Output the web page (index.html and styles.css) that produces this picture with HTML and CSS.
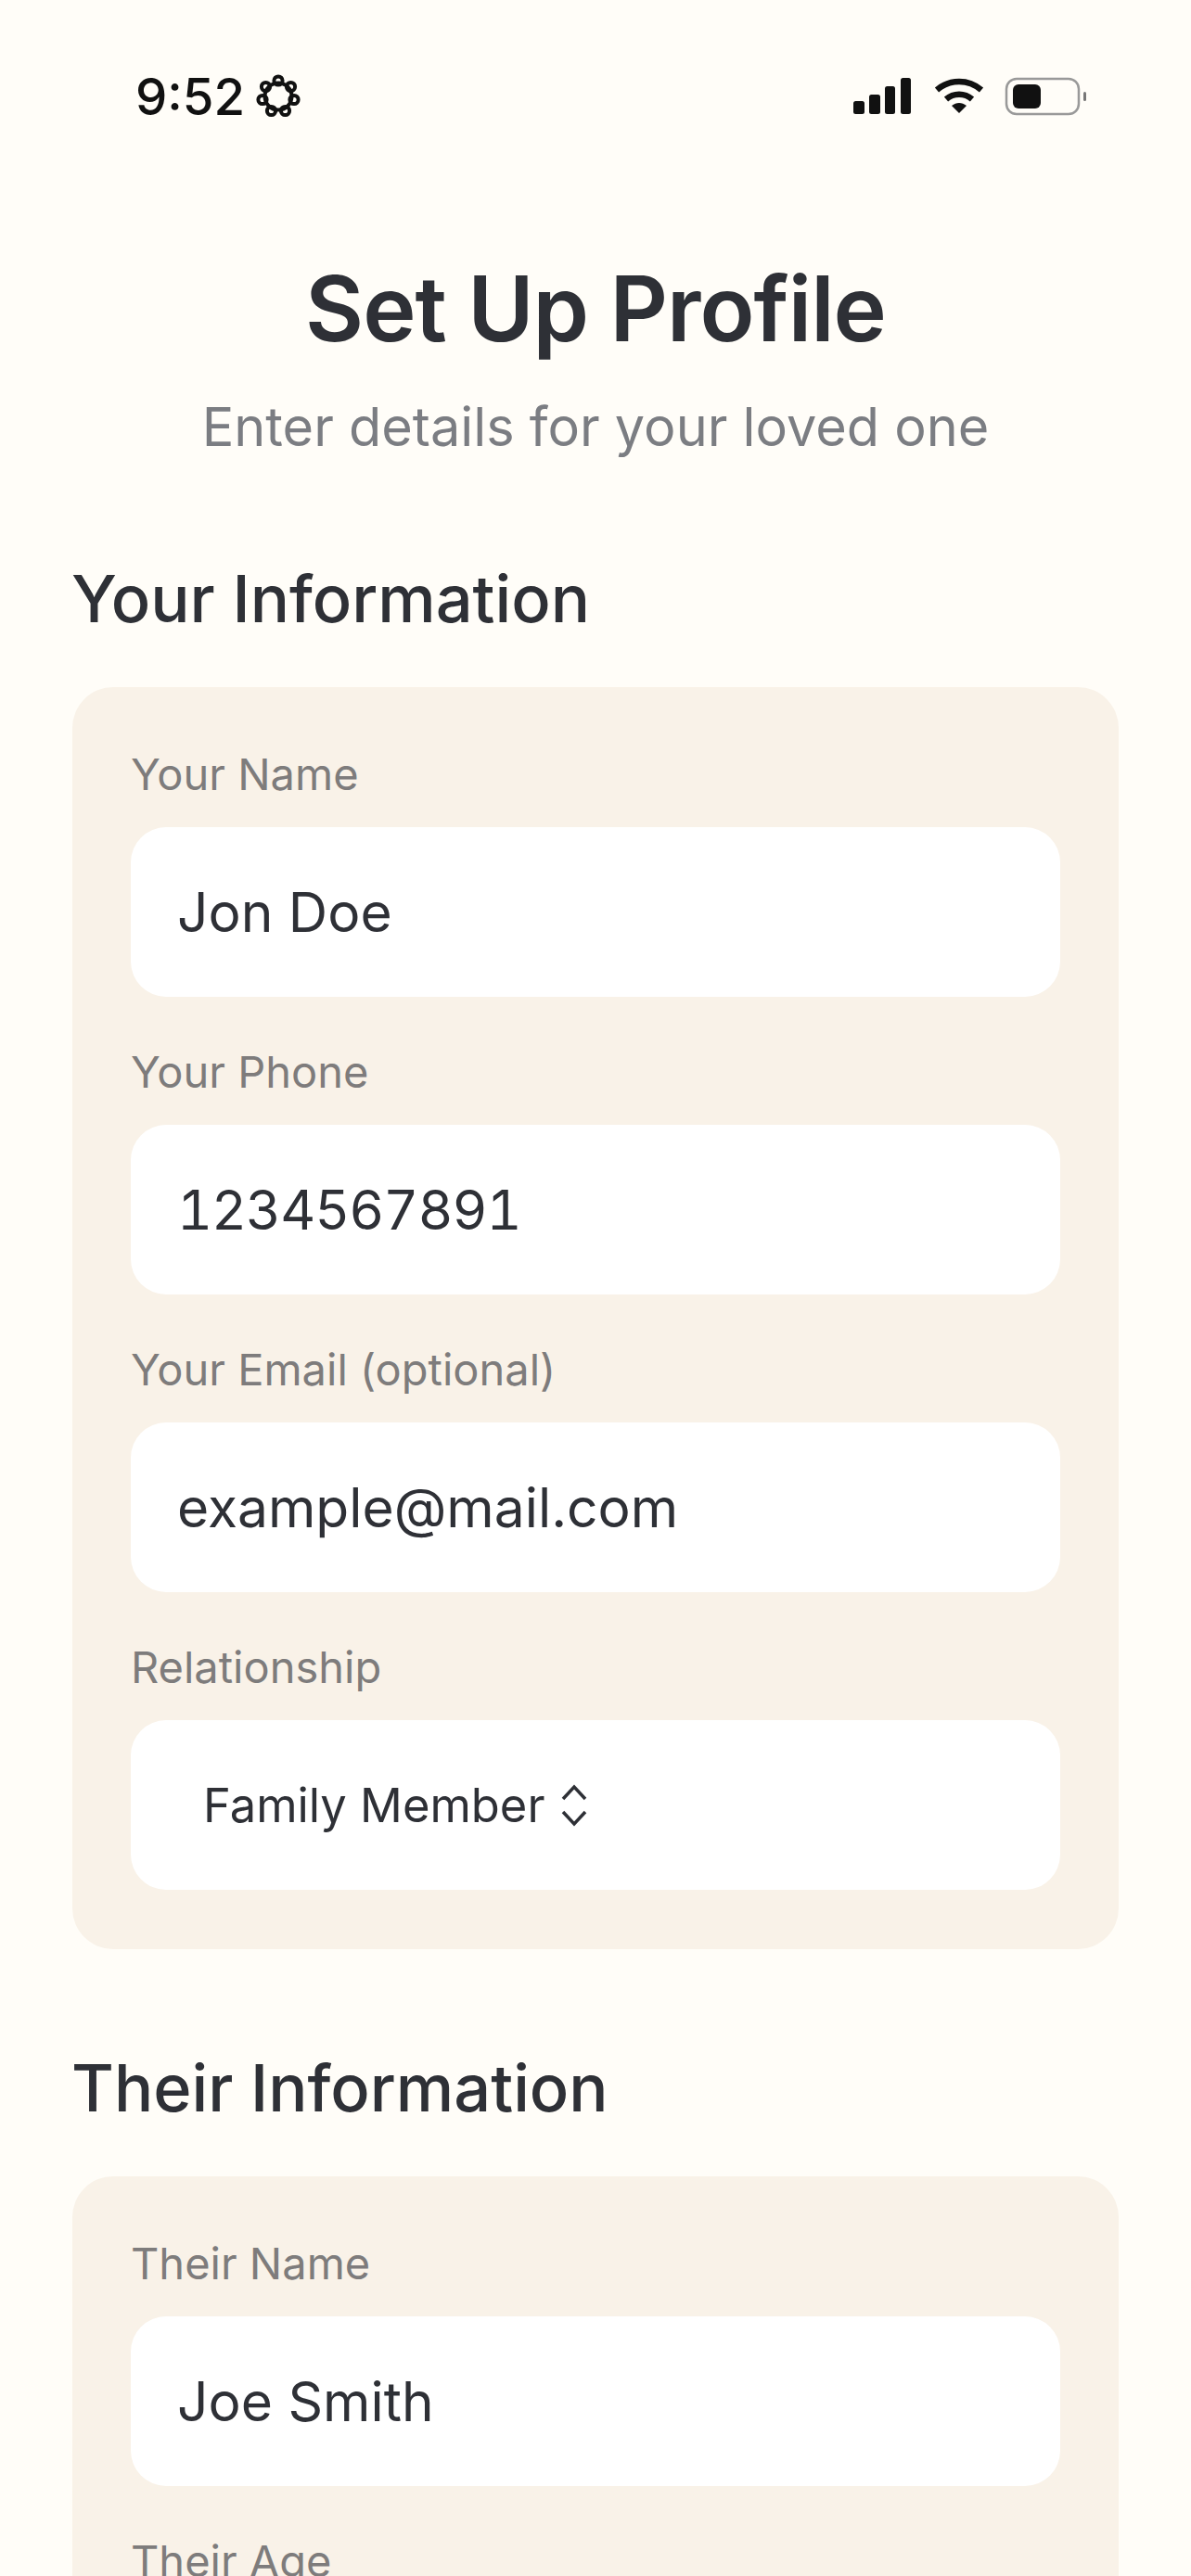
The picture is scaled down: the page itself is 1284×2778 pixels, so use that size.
FILE: index.html
```html
<!DOCTYPE html>
<html lang="en">
<head>
<meta charset="utf-8">
<title>Set Up Profile</title>
<link rel="stylesheet" href="styles.css">
</head>
<body>

<div class="status">
	<div class="status-left">
		<span class="time">9:52</span>
		<svg class="flower" width="48" height="48" viewBox="0 0 48 48" fill="none" stroke="#111" stroke-width="4">
			<circle cx="24" cy="24" r="14.5"/>
			<circle cx="24" cy="7" r="4.6"/>
			<circle cx="37.5" cy="13.5" r="4.6"/>
			<circle cx="41" cy="27.5" r="4.6"/>
			<circle cx="31.5" cy="39.5" r="4.6"/>
			<circle cx="16.5" cy="39.5" r="4.6"/>
			<circle cx="7" cy="27.5" r="4.6"/>
			<circle cx="10.5" cy="13.5" r="4.6"/>
		</svg>
	</div>
	<div class="status-right">
		<svg width="64" height="40" viewBox="0 0 64 40" fill="#111">
			<rect x="1" y="25" width="12" height="14" rx="2.5"/>
			<rect x="18" y="18" width="12" height="21" rx="2.5"/>
			<rect x="35" y="9" width="11" height="30" rx="2.5"/>
			<rect x="52" y="0" width="11" height="39" rx="2.5"/>
		</svg>
		<svg class="wifi" width="54" height="40" viewBox="0 0 54 40" fill="none" stroke="#111" stroke-width="6.5">
			<path d="M3 13C17 1 37 1 51 13"/>
			<path d="M13 23C21 16 33 16 41 23"/>
			<path d="M19 30L27 38L35 30C30 26 24 26 19 30Z" fill="#111" stroke="none"/>
		</svg>
		<svg class="battery" width="90" height="44" viewBox="0 0 90 44" fill="none">
			<rect x="2" y="3" width="78" height="38" rx="11" stroke="#999" stroke-width="2.5"/>
			<rect x="9" y="9" width="30" height="26" rx="6" fill="#111"/>
			<rect x="85" y="17" width="3" height="10" rx="1.5" fill="#777"/>
		</svg>
	</div>
</div>

<div class="head">
	<h1>Set Up Profile</h1>
	<p>Enter details for your loved one</p>
</div>

<h2>Your Information</h2>
<div class="card">
	<div class="field">
		<label>Your Name</label>
		<div class="box">Jon Doe</div>
	</div>
	<div class="field">
		<label>Your Phone</label>
		<div class="box phone">1234567891</div>
	</div>
	<div class="field">
		<label>Your Email (optional)</label>
		<div class="box">example@mail.com</div>
	</div>
	<div class="field">
		<label>Relationship</label>
		<div class="box select">
			<span>Family Member</span>
			<svg width="30" height="46" viewBox="0 0 30 46" fill="none" stroke="#2e3036" stroke-width="3.5">
				<path d="M3 16L15 3L27 16"/>
				<path d="M3 30L15 43L27 30"/>
			</svg>
		</div>
	</div>
</div>

<h2 class="second">Their Information</h2>
<div class="card">
	<div class="field">
		<label>Their Name</label>
		<div class="box">Joe Smith</div>
	</div>
	<div class="field">
		<label>Their Age</label>
		<div class="box"></div>
	</div>
</div>

</body>
</html>
```

FILE: styles.css
```css
html, body {
	height: 2778px;
	overflow: hidden;
}
body {
	margin: 0;
	background: #fffdf8;
	color: #2e3036;
	font-family: Inter, "Liberation Sans", sans-serif;
}
.status {
	display: flex;
	justify-content: space-between;
	align-items: center;
	height: 48px;
	padding: 80px 111px 0 146px;
}
.status-left, .status-right {
	display: flex;
	align-items: center;
}
.time {
	font-size: 54.5px;
	font-weight: 500;
	color: #111;
}
.flower { margin-left: 12px; }
.wifi { margin-left: 24px; }
.battery { margin-left: 22px; }
.head {
	text-align: center;
	margin-top: 149px;
}
h1 {
	margin: 0;
	font-size: 97px;
	line-height: 112px;
	font-weight: 600;
	letter-spacing: -1px;
}
.head p {
	margin: 35px 0 0;
	font-size: 57.6px;
	line-height: 72px;
	color: #7b7d82;
}
h2 {
	margin: 108px 0 0 77px;
	font-size: 70.3px;
	line-height: 84px;
	font-weight: 500;
}
h2.second { margin-top: 108px; }
.card {
	margin: 53px 78px 0;
	padding: 64px 63px;
	background: #f9f2e8;
	border-radius: 44px;
}
.field + .field { margin-top: 51px; }
label {
	display: block;
	font-size: 47px;
	line-height: 60px;
	color: #7e7c7c;
}
.box {
	margin-top: 27px;
	height: 183px;
	padding-left: 50px;
	display: flex;
	align-items: center;
	background: #fff;
	border-radius: 38px;
	font-size: 58.7px;
}
.phone {
	font-variant-numeric: tabular-nums;
	letter-spacing: -1px;
}
.select {
	padding-left: 78px;
	font-size: 50.7px;
}
.select svg { margin-left: 16px; }
```
